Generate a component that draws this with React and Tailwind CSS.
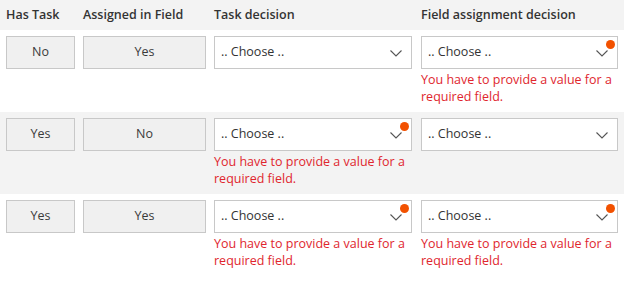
import React from 'react';

const rows = [
  { hasTask: 'No', assigned: 'Yes', taskError: false, fieldError: true },
  { hasTask: 'Yes', assigned: 'No', taskError: true, fieldError: false },
  { hasTask: 'Yes', assigned: 'Yes', taskError: true, fieldError: true },
];

function ReadOnlyBox({ value }) {
  return (
    <div className="h-[33px] flex items-center justify-center bg-[#f0f0f0] border border-[#c8c8c8] text-[#3a3a3a] text-[12.5px]">
      {value}
    </div>
  );
}

function ChoiceField({ error }) {
  return (
    <div>
      <div className="relative h-[33px] flex items-center bg-white border border-[#c8c8c8] pl-[6px] text-[12.5px] text-[#333]">
        <span>.. Choose ..</span>
        <svg className="absolute right-[9px] top-[13px]" width="12" height="7" viewBox="0 0 12 7" fill="none">
          <path d="M0.5 0.5 L6 6 L11.5 0.5" stroke="#555" strokeWidth="1.1" />
        </svg>
        {error && (
          <span className="absolute right-[2px] top-[3px] w-[9px] h-[9px] rounded-full bg-[#f25100]" />
        )}
      </div>
      {error && (
        <div className="pt-[2px] text-[12.5px] leading-[17px] text-[#e0262e]">
          You have to provide a value for a required field.
        </div>
      )}
    </div>
  );
}

export default function App() {
  return (
    <div className="w-[624px] bg-white font-['Segoe_UI','Open_Sans',sans-serif]">
      <div className="grid grid-cols-[69px_123px_198px_198px] gap-x-2 px-[6px] h-[30px] items-center bg-[#f3f3f3] text-[12.5px] font-semibold text-[#333]">
        <div>Has Task</div>
        <div>Assigned in Field</div>
        <div>Task decision</div>
        <div className="pl-px">Field assignment decision</div>
      </div>
      {rows.map((r, i) => (
        <div
          key={i}
          className={`grid grid-cols-[69px_123px_198px_198px] gap-x-2 px-[6px] pt-[6px] h-[82px] items-start ${i === 1 ? 'bg-[#f3f3f3]' : 'bg-white'}`}
        >
          <ReadOnlyBox value={r.hasTask} />
          <ReadOnlyBox value={r.assigned} />
          <ChoiceField error={r.taskError} />
          <div className="pl-px">
            <ChoiceField error={r.fieldError} />
          </div>
        </div>
      ))}
    </div>
  );
}
